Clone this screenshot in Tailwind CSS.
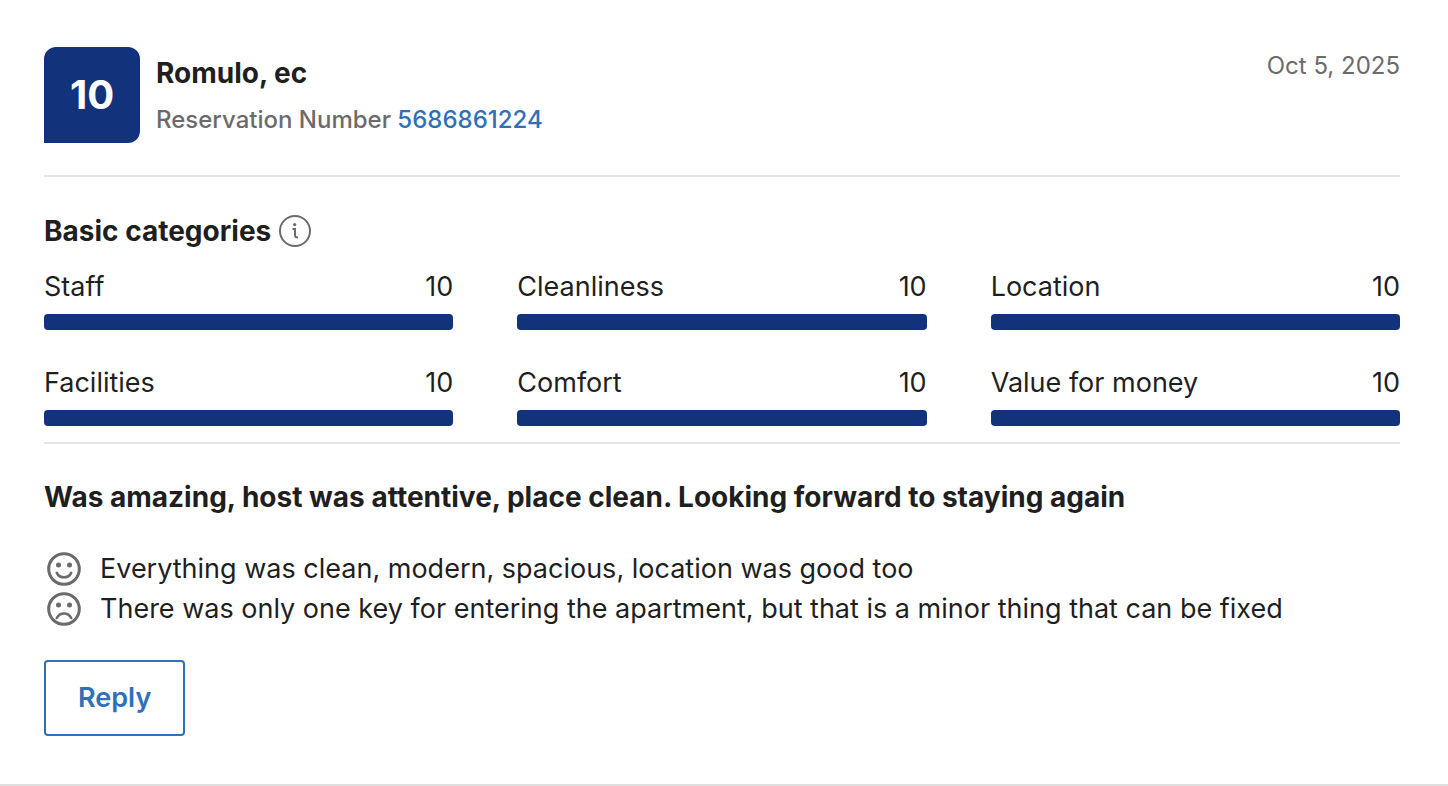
<!DOCTYPE html>
<html lang="en">

<head>
    <meta charset="UTF-8">
    <meta name="viewport" content="width=device-width, initial-scale=1.0">
    <script src="https://cdn.jsdelivr.net/npm/@tailwindcss/browser@4"></script>
    <title>Guest review</title>
</head>

<body class="bg-white font-['Inter',sans-serif] text-[#1f1f1f]">

    <article class="border-b-2 border-[#dedede] pt-[47px] pr-12 pb-12 pl-11">
        <header class="flex items-start gap-4 border-b-2 border-[#e4e4e4] pb-8">
            <div class="flex size-24 shrink-0 items-center justify-center rounded-xl rounded-bl-none bg-[#12327b] text-[40px] font-bold text-white">10</div>
            <div class="grow pt-2">
                <h2 class="text-[28px] leading-9 font-bold">Romulo, ec</h2>
                <p class="mt-3 text-[24px] leading-[34px] font-medium text-[#6b6b6b]">Reservation Number <a href="#" class="text-[#2f70b8]">5686861224</a></p>
            </div>
            <time datetime="2025-10-05" class="text-[24px] leading-[38px] text-[#6b6b6b]">Oct 5, 2025</time>
        </header>

        <section class="border-b-2 border-[#e4e4e4] pt-9 pb-4">
            <div class="flex items-center gap-2">
                <h3 class="text-[28px] leading-9 font-bold">Basic categories</h3>
                <button type="button" aria-label="About basic categories">
                    <svg class="size-8" viewBox="0 0 32 32" fill="none" stroke="#6b6b6b" stroke-width="2">
                        <circle cx="16" cy="16" r="15" />
                        <path d="M13.5 14H16V20.5Q16 22.5 19 22.5" />
                        <circle cx="15.7" cy="9.6" r="1.6" fill="#6b6b6b" stroke="none" />
                    </svg>
                </button>
            </div>
            <div id="categories" class="mt-[17px] grid grid-cols-3 gap-x-16 gap-y-8"></div>
        </section>

        <section class="pt-[35px]">
            <h3 class="text-[28px] leading-9 font-bold">Was amazing, host was attentive, place clean. Looking forward to staying again</h3>
            <ul class="mt-[34px] text-[27px] leading-10">
                <li class="flex items-center gap-4">
                    <svg class="size-10 shrink-0" viewBox="0 0 40 40" fill="none" stroke="#6b6b6b" stroke-width="3">
                        <circle cx="20" cy="20" r="15.3" />
                        <path d="M12.8 23.8c3 6 11.4 6 14.4 0" stroke-width="2.6" stroke-linecap="round" />
                        <circle cx="14.5" cy="16" r="2.5" fill="#6b6b6b" stroke="none" />
                        <circle cx="25.5" cy="16" r="2.5" fill="#6b6b6b" stroke="none" />
                    </svg>
                    <p>Everything was clean, modern, spacious, location was good too</p>
                </li>
                <li class="flex items-center gap-4">
                    <svg class="size-10 shrink-0" viewBox="0 0 40 40" fill="none" stroke="#6b6b6b" stroke-width="3">
                        <circle cx="20" cy="20" r="15.3" />
                        <path d="M12.8 29c3-6 11.4-6 14.4 0" stroke-width="2.6" stroke-linecap="round" />
                        <circle cx="14.5" cy="16" r="2.5" fill="#6b6b6b" stroke="none" />
                        <circle cx="25.5" cy="16" r="2.5" fill="#6b6b6b" stroke="none" />
                    </svg>
                    <p>There was only one key for entering the apartment, but that is a minor thing that can be fixed</p>
                </li>
            </ul>
            <button type="button" class="mt-[31px] rounded border-2 border-[#2f70b8] px-8 py-4 text-[27px] leading-10 font-semibold text-[#2f70b8] hover:bg-blue-50">Reply</button>
        </section>
    </article>

    <script>
        const categories = [
            { name: "Staff", score: 10 },
            { name: "Cleanliness", score: 10 },
            { name: "Location", score: 10 },
            { name: "Facilities", score: 10 },
            { name: "Comfort", score: 10 },
            { name: "Value for money", score: 10 },
        ];

        document.getElementById("categories").innerHTML = categories.map((category) => `
            <div>
                <div class="flex justify-between text-[27px] leading-[42px]">
                    <span>${category.name}</span>
                    <span>${category.score}</span>
                </div>
                <div class="mt-1.5 h-4 rounded bg-gray-200">
                    <div class="h-4 rounded bg-[#12327b]" style="width: ${category.score * 10}%"></div>
                </div>
            </div>
        `).join("");
    </script>
</body>

</html>
